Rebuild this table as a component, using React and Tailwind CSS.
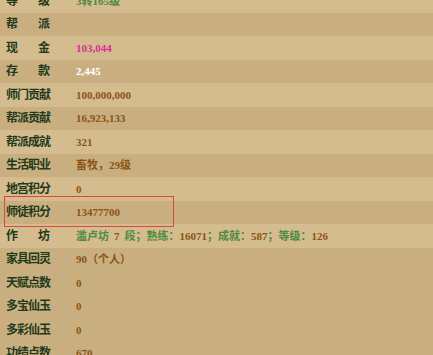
import React from "react";

const G = ({ children }) => <span className="text-[#4f8a45]">{children}</span>;
const B = ({ children }) => <span className="text-[#8a5418]">{children}</span>;

const rows = [
    { label: ["等", "级"], value: <G>3转165级</G> },
    { label: ["帮", "派"], value: null },
    { label: ["现", "金"], value: <span className="text-[#d6329a]">103,044</span> },
    { label: ["存", "款"], value: <span className="text-white font-bold">2,445</span> },
    { label: "师门贡献", value: <B>100,000,000</B> },
    { label: "帮派贡献", value: <B>16,923,133</B> },
    { label: "帮派成就", value: <B>321</B> },
    { label: "生活职业", value: <B>畜牧，29级</B> },
    { label: "地宫积分", value: <B>0</B> },
    { label: "师徒积分", value: <B>13477700</B> },
    {
        label: ["作", "坊"],
        value: (
            <>
                <G>滥卢坊</G>
                <span className="mx-[5px] text-[#8a5418]">7</span>
                <G>段；熟练：</G><B>16071</B><G>；成就：</G><B>587</B><G>；等级：</G><B>126</B>
            </>
        ),
    },
    { label: "家具回灵", value: <B>90（个人）</B> },
    { label: "天赋点数", value: <B>0</B> },
    { label: "多宝仙玉", value: <B>0</B> },
    { label: "多彩仙玉", value: <B>0</B> },
    { label: "功绩点数", value: <B>670</B> },
];

const Label = ({ label }) => {
    if (Array.isArray(label)) {
        return (
            <div className="flex w-[44px] justify-between">
                <span>{label[0]}</span>
                <span>{label[1]}</span>
            </div>
        );
    }
    return <div className="w-[45px] whitespace-nowrap tracking-[-1px]">{label}</div>;
};

export default function App() {
    return (
        <div
            className="relative h-[355px] w-[433px] overflow-hidden bg-[#c9ae7f]"
            style={{ fontFamily: '"Liberation Serif", "Noto Sans CJK SC", serif' }}
        >
            <div className="-mt-[11px] flex flex-col">
                {rows.map((row, i) => (
                    <div
                        key={i}
                        className={
                            "flex h-[23.5px] items-center pl-[6px] " +
                            (i % 2 === 0 && i < 11 ? "bg-[#d4bc8e]" : "bg-[#c9af7f]")
                        }
                    >
                        <div className="w-[70px] text-[12px] font-bold text-[#1f3a1b]">
                            <Label label={row.label} />
                        </div>
                        <div className="whitespace-nowrap text-[11px] font-bold">{row.value}</div>
                    </div>
                ))}
            </div>
            {/* highlight box */}
            <div className="absolute left-[4px] top-[196px] h-[31px] w-[170px] border border-[#e2463f]" />
        </div>
    );
}
